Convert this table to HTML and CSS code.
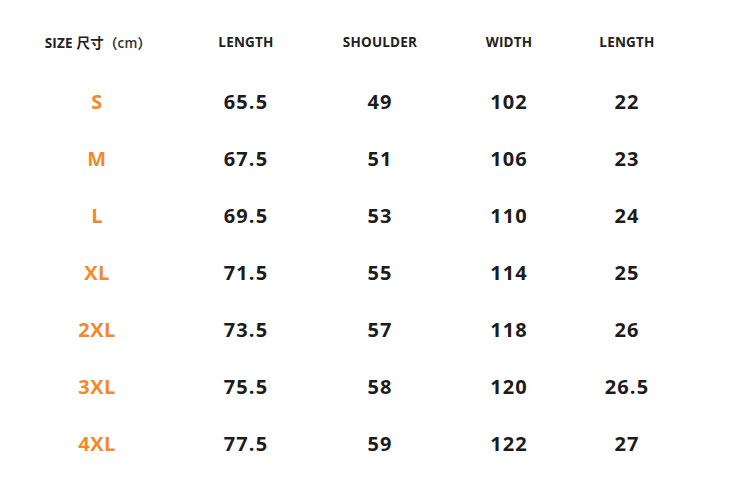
FILE: index.html
```html
<!DOCTYPE html>
<html>
<head>
<meta charset="utf-8">
<link rel="stylesheet" href="styles.css">
</head>
<body>
<div class="chart">
  <div class="row head">
    <div class="cell first">SIZE 尺寸<span class="unit">（cm）</span></div>
    <div class="cell">LENGTH</div>
    <div class="cell">SHOULDER</div>
    <div class="cell">WIDTH</div>
    <div class="cell">LENGTH</div>
  </div>
  <div class="row"><div class="cell size">S</div><div class="cell">65.5</div><div class="cell">49</div><div class="cell">102</div><div class="cell">22</div></div>
  <div class="row"><div class="cell size">M</div><div class="cell">67.5</div><div class="cell">51</div><div class="cell">106</div><div class="cell">23</div></div>
  <div class="row"><div class="cell size">L</div><div class="cell">69.5</div><div class="cell">53</div><div class="cell">110</div><div class="cell">24</div></div>
  <div class="row"><div class="cell size">XL</div><div class="cell">71.5</div><div class="cell">55</div><div class="cell">114</div><div class="cell">25</div></div>
  <div class="row"><div class="cell size">2XL</div><div class="cell">73.5</div><div class="cell">57</div><div class="cell">118</div><div class="cell">26</div></div>
  <div class="row"><div class="cell size">3XL</div><div class="cell">75.5</div><div class="cell">58</div><div class="cell">120</div><div class="cell">26.5</div></div>
  <div class="row"><div class="cell size">4XL</div><div class="cell">77.5</div><div class="cell">59</div><div class="cell">122</div><div class="cell">27</div></div>
</div>
</body>
</html>
```
FILE: styles.css
```css
html, body {
  margin: 0;
  padding: 0;
  background: #ffffff;
}
body {
  font-family: "Open Sans", "Noto Sans CJK SC", sans-serif;
  color: #1c1c1c;
  width: 743px;
  height: 479px;
  overflow: hidden;
}
.chart {
  padding: 15px 0 0 22px;
}
.row {
  display: grid;
  grid-template-columns: 150px 148px 120px 138px 98px;
  height: 57px;
  align-items: center;
  font-size: 20px;
  font-weight: 700;
  letter-spacing: 1.1px;
}
.row.head {
  height: 54px;
  margin-bottom: 4px;
  font-size: 13.5px;
  letter-spacing: 0.2px;
  color: #222;
}
.cell {
  text-align: center;
  white-space: nowrap;
}
.first {
  padding-left: 2px;
}
.unit {
  font-weight: 600;
  font-size: 13.5px;
  color: #333;
}
.size {
  color: #f28a2c;
  letter-spacing: 0.4px;
}
```
